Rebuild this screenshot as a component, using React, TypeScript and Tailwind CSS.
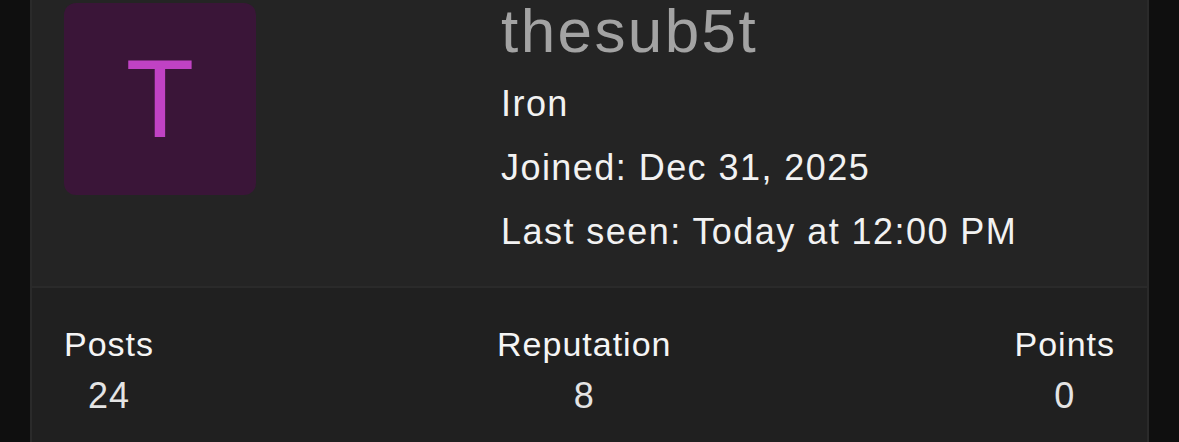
import React from "react";

const stats = [
  { label: "Posts", value: "24" },
  { label: "Reputation", value: "8" },
  { label: "Points", value: "0" },
];

export default function App() {
  return (
    <div
      className="min-h-[442px] w-full bg-[#0f0f0f] px-[30px]"
      style={{ fontFamily: '"Liberation Sans", Arial, sans-serif' }}
    >
      <div className="flex h-[442px] flex-col border-x-2 border-[#2a2a2a]">
        {/* Profile header */}
        <div className="flex h-[286px] items-start bg-[#242424] px-8">
          <div className="mt-[3px] flex h-[192px] w-[192px] shrink-0 items-center justify-center rounded-[12px] bg-[#3a1538]">
            <span className="text-[112px] leading-none text-[#c042c4]">T</span>
          </div>
          <div className="ml-[245px] flex flex-col">
            <div className="text-[62px] leading-[62px] tracking-[2.4px] text-[#a3a3a3]">
              thesub5t
            </div>
            <div className="mt-[10px] text-[36px] leading-[64px] tracking-[1.45px] text-[#f2f2f2]">
              <div>Iron</div>
              <div>Joined: Dec 31, 2025</div>
              <div>Last seen: Today at 12:00 PM</div>
            </div>
          </div>
        </div>

        {/* Stats */}
        <div className="flex flex-1 items-start justify-between border-t-2 border-[#2a2a2a] bg-[#202020] px-8 pt-9">
          {stats.map((s) => (
            <div key={s.label} className="flex flex-col items-center">
              <div className="text-[34px] leading-[40px] tracking-[1px] text-[#f5f5f5]">
                {s.label}
              </div>
              <div className="mt-[12px] text-[36px] leading-[40px] tracking-[1px] text-[#e4e4e4]">
                {s.value}
              </div>
            </div>
          ))}
        </div>
      </div>
    </div>
  );
}
